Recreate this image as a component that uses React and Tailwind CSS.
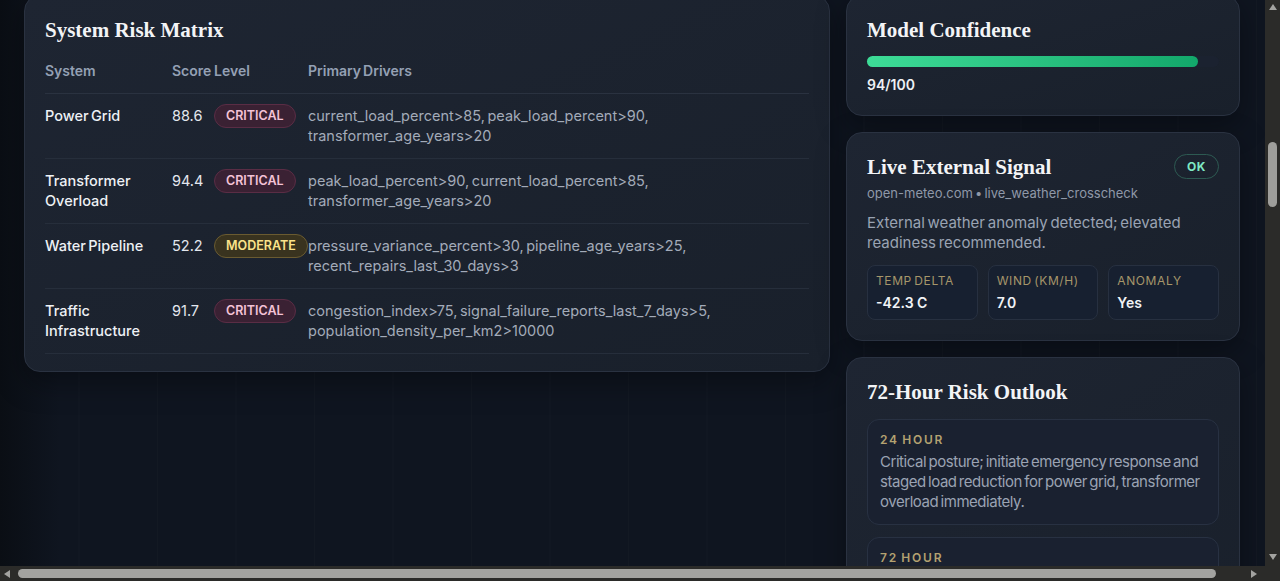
import React from "react";

const rows = [
  { name: "Power Grid", score: "88.6", level: "CRITICAL", drivers: "current_load_percent>85, peak_load_percent>90, transformer_age_years>20" },
  { name: "Transformer Overload", score: "94.4", level: "CRITICAL", drivers: "peak_load_percent>90, current_load_percent>85, transformer_age_years>20" },
  { name: "Water Pipeline", score: "52.2", level: "MODERATE", drivers: "pressure_variance_percent>30, pipeline_age_years>25, recent_repairs_last_30_days>3" },
  { name: "Traffic Infrastructure", score: "91.7", level: "CRITICAL", drivers: "congestion_index>75, signal_failure_reports_last_7_days>5, population_density_per_km2>10000" },
];

const stats = [
  { label: "TEMP DELTA", value: "-42.3 C" },
  { label: "WIND (KM/H)", value: "7.0" },
  { label: "ANOMALY", value: "Yes" },
];

const serif = { fontFamily: '"Liberation Serif", "DejaVu Serif", serif' };

function Badge({ level }) {
  const critical = level === "CRITICAL";
  return (
    <span
      className={`inline-flex h-6 items-center rounded-full border px-[11px] text-[12.5px] font-semibold ${
        critical ? "border-[#5a2d45] bg-[#3a2133] text-[#f3c3d6]" : "border-[#6a5b31] bg-[#39331f] text-[#fbe38a]"
      }`}
    >
      {level}
    </span>
  );
}

function Card({ children, className = "" }) {
  return (
    <div className={`rounded-2xl border border-[#2a3241] bg-gradient-to-br from-[#1e2532] to-[#19202b] p-5 shadow-[0_10px_30px_rgba(0,0,0,0.35)] ${className}`}>
      {children}
    </div>
  );
}

function Arrow({ dir }) {
  const pts = { up: "4,1 8,7 0,7", down: "0,1 8,1 4,7", left: "7,0 7,8 1,4", right: "1,0 1,8 7,4" }[dir];
  return (
    <svg width="8" height="8" viewBox="0 0 8 8">
      <polygon points={pts} fill="#a3a3a0" />
    </svg>
  );
}

export default function App() {
  return (
    <div className="flex h-[581px] w-[1280px] flex-col overflow-hidden bg-[#0f1520] [word-spacing:-1.5px]" style={{ fontFamily: 'Inter, "Noto Sans", sans-serif' }}>
      <div className="flex min-h-0 flex-1">
        <div className="min-w-0 flex-1 overflow-hidden bg-[linear-gradient(to_right,#0a0e14_0px,transparent_60px),linear-gradient(to_right,rgba(255,255,255,0.014)_1px,transparent_1px)] bg-[size:100%_100%,78.5px_100%]">
          <div className="-mt-[5px] flex items-start gap-4 pl-6">
            <Card className="w-[806px] shrink-0 pb-[17px]">
              <h2 className="text-[21px] font-bold leading-7 text-[#f3f4f6] [word-spacing:0]" style={serif}>System Risk Matrix</h2>
              <div className="mt-[5px] grid grid-cols-[127px_42px_94px_1fr] border-b border-[#2a3240] py-3 text-[14px] font-semibold leading-5 text-[#94a0b4]">
                <span>System</span>
                <span>Score</span>
                <span>Level</span>
                <span>Primary Drivers</span>
              </div>
              {rows.map((r) => (
                <div key={r.name} className="grid grid-cols-[127px_42px_94px_1fr] border-b border-[#262e3b] py-3 text-[14.5px] leading-5">
                  <span className="pr-4 font-medium text-[#eef1f5]">{r.name}</span>
                  <span className="text-[#e3e7ee]">{r.score}</span>
                  <span className="-mt-0.5"><Badge level={r.level} /></span>
                  <span className="pr-20 text-[#a3abb9]">{r.drivers}</span>
                </div>
              ))}
            </Card>

            <div className="flex w-[394px] shrink-0 flex-col gap-4">
              <Card>
                <h2 className="text-[21px] font-bold leading-7 text-[#f3f4f6] [word-spacing:0]" style={serif}>Model Confidence</h2>
                <div className="mt-3 h-[11px] w-full rounded-full bg-[#1b2230]">
                  <div className="h-full rounded-full bg-gradient-to-r from-[#3ddc97] to-[#12a86b]" style={{ width: "94%" }} />
                </div>
                <p className="mt-2 text-[14px] font-semibold leading-5 text-[#eef1f5]">94/100</p>
              </Card>

              <Card>
                <div className="flex items-start justify-between">
                  <h2 className="text-[21px] font-bold leading-7 text-[#f3f4f6] [word-spacing:0]" style={serif}>Live External Signal</h2>
                  <span className="mt-px flex h-[25px] items-center rounded-full border border-[#2d5a52] px-3 text-[12px] font-bold tracking-wider text-[#7ee8c4]">OK</span>
                </div>
                <p className="mt-[3px] text-[13px] leading-[18px] text-[#8f98a8]">open-meteo.com • live_weather_crosscheck</p>
                <p className="mt-[11px] text-[15px] leading-5 text-[#9aa3b3]">External weather anomaly detected; elevated readiness recommended.</p>
                <div className="mt-3 grid grid-cols-3 gap-2.5">
                  {stats.map((s) => (
                    <div key={s.label} className="rounded-lg border border-[#273040] bg-[#172030] px-2 pb-[6px] pt-[7px]">
                      <p className="text-[12px] leading-4 tracking-wider text-[#a6966a]">{s.label}</p>
                      <p className="mt-1 text-[14px] font-semibold leading-5 text-[#f1f3f6] [word-spacing:0]">{s.value}</p>
                    </div>
                  ))}
                </div>
              </Card>

              <Card>
                <h2 className="text-[21px] font-bold leading-7 text-[#f3f4f6] [word-spacing:0]" style={serif}>72-Hour Risk Outlook</h2>
                <div className="mt-[13px] flex flex-col gap-3">
                  <div className="rounded-xl border border-[#283142] bg-[#1a2130] px-3 py-3">
                    <p className="text-[12px] font-semibold leading-4 tracking-[0.15em] text-[#b4a271]">24 HOUR</p>
                    <p className="mt-1 text-[15px] leading-5 tracking-[-0.03em] text-[#9aa3b3]">Critical posture; initiate emergency response and staged load reduction for power grid, transformer overload immediately.</p>
                  </div>
                  <div className="rounded-xl border border-[#283142] bg-[#1a2130] px-3 py-3">
                    <p className="text-[12px] font-semibold leading-4 tracking-[0.15em] text-[#b4a271]">72 HOUR</p>
                    <p className="mt-1 text-[15px] leading-5 tracking-[-0.03em] text-[#9aa3b3]">Sustained elevated risk; maintain readiness posture and monitor load trends.</p>
                  </div>
                </div>
              </Card>
            </div>
          </div>
        </div>

        <div className="flex w-[15px] shrink-0 flex-col items-center bg-[#2b2b29]">
          <div className="mt-[2px] flex h-[10px] items-center"><Arrow dir="up" /></div>
          <div className="mt-[130px] h-[65px] w-[9px] rounded-full bg-[#9e9e9b]" />
          <div className="flex-1" />
          <div className="mb-[4px] flex h-[10px] items-center"><Arrow dir="down" /></div>
        </div>
      </div>

      <div className="flex h-[15px] shrink-0 items-center bg-[#2b2b29]">
        <div className="ml-[2px] flex w-[10px] justify-center"><Arrow dir="left" /></div>
        <div className="ml-[6px] h-[9px] w-[1198px] rounded-full bg-[#a3a3a0]" />
        <div className="flex-1" />
        <div className="mr-[6px] flex w-[10px] justify-center"><Arrow dir="right" /></div>
        <div className="h-full w-[15px] bg-[#2b2b29]" />
      </div>
    </div>
  );
}
